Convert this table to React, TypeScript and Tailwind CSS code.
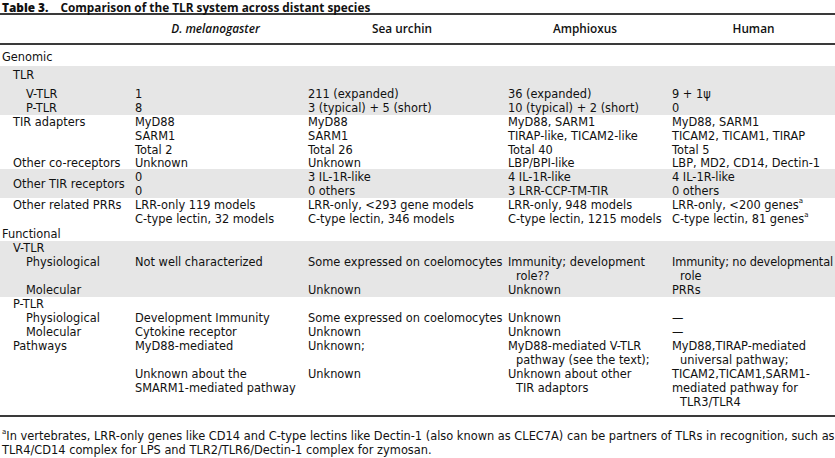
import React from "react";

type Line = string | { t: React.ReactNode; ind?: boolean; cls?: string };
type Cell = Line[];

const COLS = "grid grid-cols-[135px_173px_200px_164px_163px]";

function Lines({ cell }: { cell: Cell }) {
  return (
    <div className="flex flex-col">
      {cell.map((l, i) => {
        if (typeof l === "string") {
          return (
            <div key={i} className="h-[14px] leading-[14px] whitespace-nowrap">
              {l === "" ? "\u00a0" : l}
            </div>
          );
        }
        return (
          <div
            key={i}
            className={`h-[14px] leading-[14px] whitespace-nowrap ${l.ind ? "pl-[8px]" : ""} ${l.cls ?? ""}`}
          >
            {l.t}
          </div>
        );
      })}
    </div>
  );
}

function Row({
  label,
  indent,
  cells,
  center,
  className = "",
}: {
  label: string;
  indent: 0 | 1 | 2;
  cells?: Cell[];
  center?: boolean;
  className?: string;
}) {
  const ind = indent === 0 ? "pl-[2px]" : indent === 1 ? "pl-[13px]" : "pl-[26px]";
  return (
    <div className={`${COLS} ${className}`}>
      <div className={`${ind} leading-[14px] whitespace-nowrap ${center ? "flex items-center" : ""}`}>
        {label}
      </div>
      {(cells ?? [[], [], [], []]).map((c, i) => (
        <Lines key={i} cell={c} />
      ))}
    </div>
  );
}

const Sup = () => <sup className="text-[7px] relative top-[-1px] align-super leading-none">a</sup>;

export default function App() {
  return (
    <div className="w-[835px] h-[458px] overflow-hidden bg-white text-[#111] font-['DejaVu_Sans',sans-serif] text-[11.4px]">
      {/* Title */}
      <div className="h-[13px] leading-[14px] pl-[2px] text-[11.8px] whitespace-nowrap font-['Open_Sans',sans-serif]">
        <span className="font-extrabold">Table 3.</span>
        <span className="font-bold ml-[12px]">Comparison of the TLR system across distant species</span>
      </div>
      <div className="h-[2px] bg-[#3a3a3a]" />
      {/* Header */}
      <div className={`${COLS} h-[28px] items-center font-semibold text-[11.8px] font-['Open_Sans',sans-serif]`}>
        <div />
        <div className="text-center pr-[12px] italic">D. melanogaster</div>
        <div className="text-center pr-[12px]">Sea urchin</div>
        <div className="text-center pr-[10px]">Amphioxus</div>
        <div className="text-center">Human</div>
      </div>
      <div className="h-[2px] bg-[#3a3a3a]" />
      <div className="h-[5px]" />
      <Row label="Genomic" indent={0} />
      <div className="h-[2px]" />
      {/* TLR gray block */}
      <div className="bg-[#e6e6e6] pt-[2px]">
        <Row label="TLR" indent={1} />
        <div className="h-[5px]" />
        <Row
          label="V-TLR"
          indent={2}
          cells={[["1"], ["211 (expanded)"], ["36 (expanded)"], ["9 + 1\u03c8"]]}
        />
        <Row
          label="P-TLR"
          indent={2}
          cells={[["8"], ["3 (typical) + 5 (short)"], ["10 (typical) + 2 (short)"], ["0"]]}
        />
      </div>
      <Row
        label="TIR adapters"
        indent={1}
        cells={[
          ["MyD88", "SARM1", "Total 2"],
          ["MyD88", "SARM1", "Total 26"],
          ["MyD88, SARM1", "TIRAP-like, TICAM2-like", "Total 40"],
          ["MyD88, SARM1", "TICAM2, TICAM1, TIRAP", "Total 5"],
        ]}
      />
      <div className="h-[13px] overflow-visible">
        <Row
          label="Other co-receptors"
          indent={1}
          className="-mt-[1px]"
          cells={[["Unknown"], ["Unknown"], ["LBP/BPI-like"], ["LBP, MD2, CD14, Dectin-1"]]}
        />
      </div>
      <div className="bg-[#e6e6e6] pt-[1px]">
        <Row
          label="Other TIR receptors"
          indent={1}
          center
          cells={[
            ["0", "0"],
            ["3 IL-1R-like", "0 others"],
            ["4 IL-1R-like", "3 LRR-CCP-TM-TIR"],
            ["4 IL-1R-like", "0 others"],
          ]}
        />
      </div>
      <Row
        label="Other related PRRs"
        indent={1}
        cells={[
          ["LRR-only 119 models", "C-type lectin, 32 models"],
          ["LRR-only, <293 gene models", "C-type lectin, 346 models"],
          ["LRR-only, 948 models", "C-type lectin, 1215 models"],
          [
            { t: <>LRR-only, &lt;200 genes<Sup /></> },
            { t: <>C-type lectin, 81 genes<Sup /></> },
          ],
        ]}
      />
      <div className="h-[1px]" />
      <Row label="Functional" indent={0} />
      <div className="bg-[#e6e6e6]">
        <Row label="V-TLR" indent={1} />
        <Row
          label="Physiological"
          indent={2}
          cells={[
            ["Not well characterized"],
            ["Some expressed on coelomocytes"],
            ["Immunity; development", { t: "role??", ind: true }],
            [{ t: "Immunity; no developmental", cls: "tracking-[-0.15px]" }, { t: "role", ind: true }],
          ]}
        />
        <Row label="Molecular" indent={2} cells={[[""], ["Unknown"], ["Unknown"], ["PRRs"]]} />
      </div>
      <Row label="P-TLR" indent={1} />
      <Row
        label="Physiological"
        indent={2}
        cells={[
          ["Development Immunity"],
          ["Some expressed on coelomocytes"],
          ["Unknown"],
          ["\u2014"],
        ]}
      />
      <Row
        label="Molecular"
        indent={2}
        cells={[["Cytokine receptor"], ["Unknown"], ["Unknown"], ["\u2014"]]}
      />
      <Row
        label="Pathways"
        indent={1}
        cells={[
          ["MyD88-mediated", "", "Unknown about the", "SMARM1-mediated pathway"],
          ["Unknown;", "", "Unknown"],
          [
            "MyD88-mediated V-TLR",
            { t: "pathway (see the text);", ind: true },
            "Unknown about other",
            { t: "TIR adaptors", ind: true },
          ],
          [
            "MyD88,TIRAP-mediated",
            { t: "universal pathway;", ind: true },
            "TICAM2,TICAM1,SARM1-",
            "mediated pathway for",
            { t: "TLR3/TLR4", ind: true },
          ],
        ]}
      />
      <div className="h-[6px]" />
      <div className="h-[2px] bg-[#3a3a3a]" />
      <div className="h-[12px]" />
      {/* Footnote */}
      <div className="px-[2px]">
        <div className="h-[14px] leading-[14px] text-justify [text-align-last:justify] whitespace-nowrap">
          <Sup />In vertebrates, LRR-only genes like CD14 and C-type lectins like Dectin-1 (also known as CLEC7A) can be partners of TLRs in recognition, such as
        </div>
        <div className="h-[14px] leading-[14px] whitespace-nowrap">
          TLR4/CD14 complex for LPS and TLR2/TLR6/Dectin-1 complex for zymosan.
        </div>
      </div>
    </div>
  );
}
